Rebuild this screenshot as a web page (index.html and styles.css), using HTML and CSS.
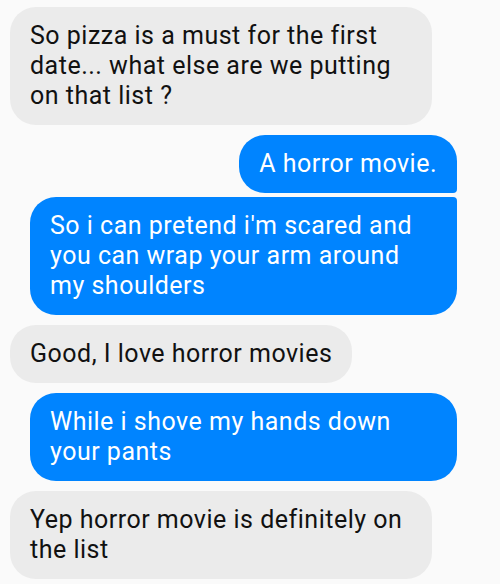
FILE: index.html
```html
<!DOCTYPE html>
<html lang="en">
<head>
    <meta charset="UTF-8">
    <meta name="viewport" content="width=device-width, initial-scale=1.0">
    <title>Chat</title>
    <link rel="stylesheet" href="styles.css">
</head>
<body>
    <div class="chat">
        <div class="msg msg-in">So pizza is a must for the first date... what else are we putting on that list ?</div>

        <div class="group-out">
            <div class="msg msg-out first">A horror movie.</div>
            <div class="msg msg-out last">So i can pretend i'm scared and you can wrap your arm around my shoulders</div>
        </div>

        <div class="msg msg-in">Good, I love horror movies</div>

        <div class="msg msg-out">While i shove my hands down your pants</div>

        <div class="msg msg-in">Yep horror movie is definitely on the list</div>
    </div>
</body>
</html>
```

FILE: styles.css
```css
body {
    margin: 0;
    background-color: #fafafa;
    font-family: Roboto, "Noto Sans", sans-serif;
    color: #111;
}

.chat {
    display: flex;
    flex-direction: column;
    gap: 10px;
    padding: 7px 43px 0 10px;
}

.msg {
    font-size: 25px;
    line-height: 30px;
    letter-spacing: 0.5px;
    padding: 14px 20px;
    border-radius: 26px;
    box-sizing: border-box;
}

.msg-in {
    align-self: flex-start;
    max-width: 422px;
    background-color: #ebebeb;
}

.msg-out {
    align-self: flex-end;
    max-width: 427px;
    background-color: #0084ff;
    color: #fff;
}

.group-out {
    display: flex;
    flex-direction: column;
    gap: 4px;
}

/* stacked bubbles from same sender */
.msg-out.first {
    border-bottom-right-radius: 4px;
}
.msg-out.last {
    border-top-right-radius: 4px;
}
```
